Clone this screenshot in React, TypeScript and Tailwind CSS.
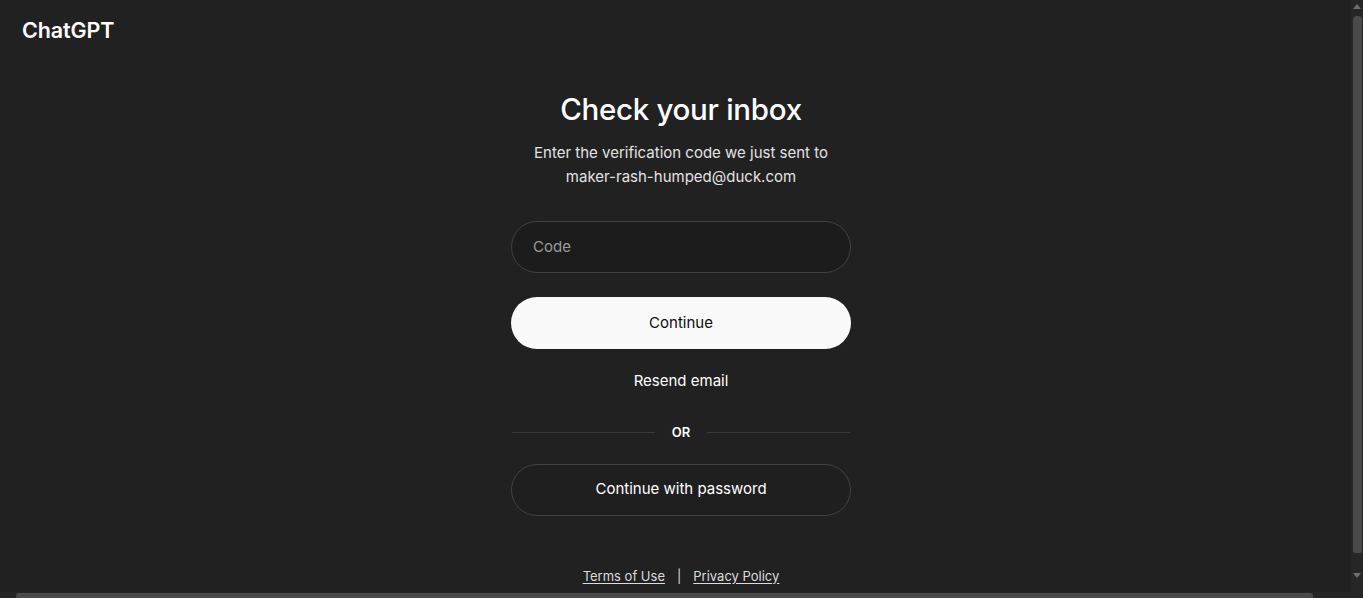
export default function App() {
  const font = { fontFamily: 'Inter, "Noto Sans", sans-serif' };
  return (
    <div className="relative h-screen w-screen overflow-hidden bg-[#212121]" style={font}>
      <div className="flex h-full w-full flex-col text-white">
        <header className="px-[22px] pt-[18px] text-[21.5px] font-semibold leading-[24px] tracking-[-0.1px]">
          ChatGPT
        </header>
        <main className="flex flex-1 flex-col items-center pr-px">
          <h1 className="mt-[47px] text-[29.5px] font-medium leading-[40px] tracking-[-0.3px]">
            Check your inbox
          </h1>
          <p className="mt-[12px] text-center text-[15px] leading-[24px] text-[#e3e3e3]">
            Enter the verification code we just sent to
            <br />
            maker-rash-humped@duck.com
          </p>
          <div className="mt-[32px] flex w-[340px] flex-col">
            <div className="flex h-[52px] items-center rounded-full border border-[#424242] bg-[#1c1c1c] px-[21px] text-[15px] text-[#9b9b9b]">
              Code
            </div>
            <button className="mt-[24px] h-[52px] rounded-full bg-[#f9f9f9] text-[15px] text-[#0d0d0d]">
              Continue
            </button>
            <div className="mt-[21px] text-center text-[15px] leading-[22px] text-white">
              Resend email
            </div>
            <div className="mt-[31px] flex items-center gap-[17px] px-px">
              <div className="h-px flex-1 bg-[#3a3a3a]" />
              <span className="text-[13px] font-semibold text-white">OR</span>
              <div className="h-px flex-1 bg-[#3a3a3a]" />
            </div>
            <button className="mt-[21px] h-[52px] rounded-full border border-[#424242] bg-[#1f1f1f] text-[15px] text-white">
              Continue with password
            </button>
          </div>
          <footer className="mt-auto flex items-center gap-[12px] pb-[12px] text-[13px] text-[#dcdcdc]">
            <a className="underline underline-offset-2">Terms of Use</a>
            <span>|</span>
            <a className="underline underline-offset-2">Privacy Policy</a>
          </footer>
        </main>
      </div>

      {/* vertical scrollbar */}
      <div className="absolute right-0 top-0 flex h-[592px] w-[12px] flex-col items-center bg-[#262626]">
        <svg width="8" height="6" viewBox="0 0 8 6" className="mt-[4px]">
          <path d="M4 0 L8 5 L0 5 Z" fill="#6e6e6e" />
        </svg>
        <div className="mt-[6px] h-[537px] w-[9px] rounded-t-[4px] rounded-b-[2px] bg-[#4a4a4a]" />
        <svg width="8" height="6" viewBox="0 0 8 6" className="mt-[20px]">
          <path d="M0 0 L8 0 L4 5 Z" fill="#6e6e6e" />
        </svg>
      </div>

      {/* horizontal scrollbar */}
      <div className="absolute bottom-0 left-0 flex h-[6px] w-[1351px] items-start bg-[#262626]">
        <div className="ml-[16px] mt-[1px] h-[5px] w-[1297px] rounded-t-[3px] bg-[#4a4a4a]" />
      </div>
      <div className="absolute bottom-0 right-0 h-[6px] w-[12px] bg-[#262626]" />
    </div>
  );
}
